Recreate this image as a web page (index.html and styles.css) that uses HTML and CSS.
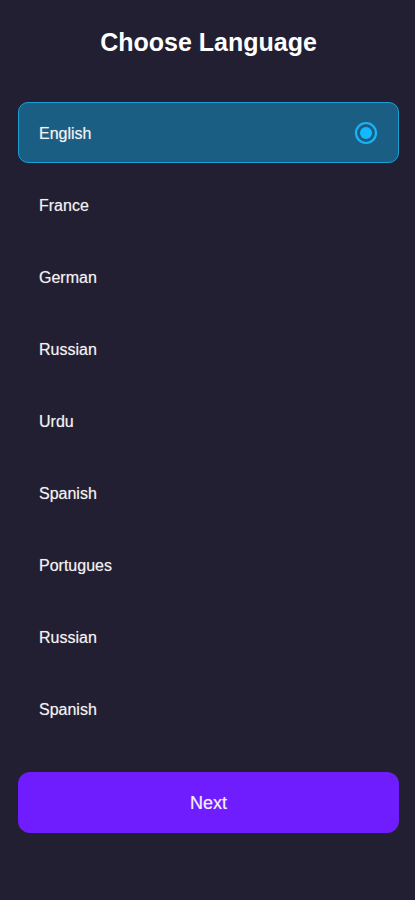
FILE: index.html
```html
<!DOCTYPE html>
<html>
<head>
<meta charset="utf-8">
<link rel="stylesheet" href="styles.css">
</head>
<body>
<div class="screen">
  <h1 class="title">Choose Language</h1>
  <ul class="list">
    <li class="item selected"><span>English</span>
      <svg class="radio" width="24" height="24" viewBox="0 0 24 24"><circle cx="12" cy="12" r="10" fill="none" stroke="#1ab4f5" stroke-width="2.2"/><circle cx="12" cy="12" r="6" fill="#14b8ff"/></svg>
    </li>
    <li class="item"><span>France</span></li>
    <li class="item"><span>German</span></li>
    <li class="item"><span>Russian</span></li>
    <li class="item"><span>Urdu</span></li>
    <li class="item"><span>Spanish</span></li>
    <li class="item"><span>Portugues</span></li>
    <li class="item"><span>Russian</span></li>
    <li class="item"><span>Spanish</span></li>
  </ul>
  <button class="next">Next</button>
</div>
</body>
</html>
```
FILE: styles.css
```css
html, body {
  margin: 0;
  padding: 0;
  background: #221f33;
}
body {
  font-family: "Liberation Sans", Arial, sans-serif;
  color: #f2f2f2;
}
.screen {
  width: 415px;
  height: 900px;
  box-sizing: border-box;
  padding: 27px 16px 0 18px;
  display: flex;
  flex-direction: column;
}
.title {
  margin: 0;
  font-size: 25px;
  line-height: 30px;
  font-weight: bold;
  text-align: center;
  color: #ffffff;
}
.list {
  list-style: none;
  margin: 45px 0 0 0;
  padding: 0;
  display: flex;
  flex-direction: column;
  gap: 11px;
}
.item {
  height: 61px;
  box-sizing: border-box;
  padding: 0 20px 0 20px;
  display: flex;
  align-items: center;
  justify-content: space-between;
  font-size: 16px;
  border-radius: 10px;
  border: 1.5px solid transparent;
  text-shadow: 0 0 1px rgba(255,255,255,0.45);
}
.item span {
  padding-top: 2px;
}
.item.selected {
  background: #1b5e84;
  border-color: #1d9fd6;
}
.radio {
  display: block;
}
.next {
  margin-top: 33px;
  height: 61px;
  padding-top: 2px;
  border: none;
  border-radius: 12px;
  background: #6f1dfe;
  color: #f4eefe;
  font-family: "Liberation Sans", Arial, sans-serif;
  font-size: 18px;
  text-shadow: 0 0 1px rgba(255,255,255,0.45);
}
```
